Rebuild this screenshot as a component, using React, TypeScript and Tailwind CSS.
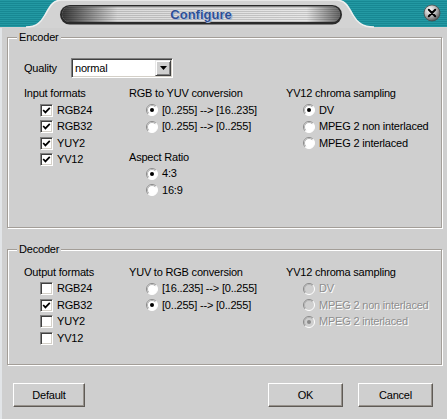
import React from 'react'

const BG = 'bg-[#cfcfcf]'

function TitleBar() {
  return (
    <div className="relative h-[28px] w-[447px] shrink-0">
      <svg className="absolute left-0 top-0" width="447" height="28" viewBox="0 0 447 28">
        <defs>
          <pattern id="teal" width="4" height="2" patternUnits="userSpaceOnUse">
            <rect width="4" height="2" fill="#178893" />
            <rect width="4" height="1" fill="#2399a3" />
          </pattern>
          <pattern id="stripes" width="4" height="2" patternUnits="userSpaceOnUse">
            <rect width="4" height="2" fill="#c4c4c4" />
            <rect width="4" height="1" fill="#e6e6e6" />
          </pattern>
          <linearGradient id="shade" x1="0" x2="1" y1="0" y2="0">
            <stop offset="0" stopColor="#000" stopOpacity="0.75" />
            <stop offset="0.2" stopColor="#000" stopOpacity="0.05" />
            <stop offset="0.88" stopColor="#000" stopOpacity="0" />
            <stop offset="1" stopColor="#000" stopOpacity="0.55" />
          </linearGradient>
          <radialGradient id="ball" cx="0.38" cy="0.32" r="0.7">
            <stop offset="0" stopColor="#ffffff" />
            <stop offset="0.55" stopColor="#b8b8b8" />
            <stop offset="1" stopColor="#555" />
          </radialGradient>
        </defs>
        <rect width="447" height="28" fill="#cfcfcf" />
        <rect width="447" height="27" fill="url(#teal)" />
        <path
          d="M0,28 L0,27 L26,27 C37,27 41,22 45,15 C50,6 53,0 62,0 L336,0 C345,0 348,6 353,15 C357,22 362,27 374,27 L447,27 L447,28 Z"
          fill="#d3d3d3"
        />
        <path
          d="M26,27 C37,27 41,22 45,15 C50,6 53,0 62,0 L336,0 C345,0 348,6 353,15 C357,22 362,27 374,27"
          fill="none"
          stroke="#efefef"
          strokeWidth="1.5"
        />
        <rect x="60" y="5" width="282" height="19.5" rx="9.75" fill="#2a2a2a" />
        <rect x="62" y="6.5" width="278" height="15.5" rx="7.75" fill="url(#stripes)" />
        <rect x="62" y="6.5" width="278" height="15.5" rx="7.75" fill="url(#shade)" />
        <circle cx="432" cy="13" r="8" fill="url(#ball)" stroke="#4a4a4a" strokeWidth="0.8" />
        <path d="M428.8,9.8 L435.2,16.2 M435.2,9.8 L428.8,16.2" stroke="#000" strokeWidth="2" strokeLinecap="round" />
      </svg>
      <div className="absolute left-[60px] top-[5px] w-[282px] h-[19px] flex items-center justify-center text-[13px] font-bold tracking-normal text-[#2d4f93] [text-shadow:0_0_1px_#e8eefa,1px_1px_0_#9aa8c8]">
        Configure
      </div>
    </div>
  )
}

function Check({ checked }: { checked?: boolean }) {
  return (
    <div className="w-[13px] h-[13px] shrink-0 bg-white border border-t-[#808080] border-l-[#808080] border-b-white border-r-white shadow-[inset_1px_1px_0_#404040,inset_-1px_-1px_0_#d4d0c8] flex items-center justify-center">
      {checked && (
        <svg width="9" height="9" viewBox="0 0 9 9">
          <path d="M1.2,4 L3.4,6.4 L7.8,1.8" fill="none" stroke="#000" strokeWidth="1.7" />
        </svg>
      )}
    </div>
  )
}

function Radio({ checked, disabled }: { checked?: boolean; disabled?: boolean }) {
  return (
    <svg width="12" height="12" viewBox="0 0 12 12" className="shrink-0">
      <circle cx="6" cy="6" r="5.5" fill={disabled ? '#cfcfcf' : '#fff'} />
      <path d="M2.1,9.9 A5.5,5.5 0 0 1 9.9,2.1" fill="none" stroke="#8a8a8a" strokeWidth="1" />
      <path d="M2.8,9.2 A4.5,4.5 0 0 1 9.2,2.8" fill="none" stroke="#b4b4b4" strokeWidth="1" />
      <path d="M9.9,2.1 A5.5,5.5 0 0 1 2.1,9.9" fill="none" stroke="#fff" strokeWidth="1" />
      {checked && <circle cx="6" cy="6" r="2" fill={disabled ? '#8a8a8a' : '#000'} />}
    </svg>
  )
}

function CheckRow({ label, checked }: { label: string; checked?: boolean }) {
  return (
    <div className="h-[16.5px] flex items-center pl-[16px] gap-[4px]">
      <Check checked={checked} />
      <span>{label}</span>
    </div>
  )
}

function RadioRow({ label, checked, disabled }: { label: string; checked?: boolean; disabled?: boolean }) {
  return (
    <div className="h-[16.5px] flex items-center pl-[17px] gap-[4px]">
      <Radio checked={checked} disabled={disabled} />
      <span className={disabled ? 'text-[#8e8e8e] [text-shadow:1px_1px_0_#fff]' : ''}>{label}</span>
    </div>
  )
}

function Heading({ children, className = '' }: { children: React.ReactNode; className?: string }) {
  return <div className={`h-[17px] flex items-center ${className}`}>{children}</div>
}

function GroupBox({ label, className, children }: { label: string; className: string; children: React.ReactNode }) {
  return (
    <div className={`relative ml-[5px] w-[435px] border border-[#a39e98] shadow-[1px_1px_0_#fff,inset_1px_1px_0_#fff] pl-[16px] ${className}`}>
      <span className={`absolute left-[9px] top-[-7px] px-[2px] leading-[13px] ${BG}`}>{label}</span>
      {children}
    </div>
  )
}

function Button({ label, className = '' }: { label: string; className?: string }) {
  return (
    <button className={`h-[24px] ${BG} border border-t-white border-l-white border-b-[#5f5b56] border-r-[#5f5b56] shadow-[inset_-1px_-1px_0_#98938d] flex items-center justify-center ${className}`}>
      {label}
    </button>
  )
}

export default function App() {
  return (
    <div className={`w-[447px] h-[419px] ${BG} flex flex-col overflow-hidden font-['Liberation_Sans',Arial,sans-serif] text-[11px] leading-[13px] tracking-[-0.2px] text-black`}>
      <TitleBar />
      <div className="flex flex-1">
        <div className="w-[2px] bg-[#e2e5e8]" />
        <div className="flex-1 flex flex-col">
          <GroupBox label="Encoder" className="mt-[9px] h-[191px] pt-[20px]">
            <div className="flex items-center h-[20px]">
              <span className="w-[47px]">Quality</span>
              <div className="relative w-[102px] h-[20px] bg-white border border-t-[#808080] border-l-[#808080] border-b-white border-r-white shadow-[inset_1px_1px_0_#404040,inset_-1px_-1px_0_#d4d0c8] flex items-center pl-[3px]">
                normal
                <div className={`absolute right-[1px] top-[1px] w-[16px] h-[16px] ${BG} border border-t-[#e8e8e8] border-l-[#e8e8e8] border-b-[#404040] border-r-[#404040] shadow-[inset_1px_1px_0_#fff,inset_-1px_-1px_0_#808080] flex items-center justify-center`}>
                  <svg width="7" height="4" viewBox="0 0 7 4">
                    <path d="M0,0 L7,0 L3.5,4 Z" fill="#000" />
                  </svg>
                </div>
              </div>
            </div>
            <div className="flex mt-[7px]">
              <div className="w-[105px]">
                <Heading>Input formats</Heading>
                <CheckRow label="RGB24" checked />
                <CheckRow label="RGB32" checked />
                <CheckRow label="YUY2" checked />
                <CheckRow label="YV12" checked />
              </div>
              <div className="w-[157px]">
                <Heading>RGB to YUV conversion</Heading>
                <RadioRow label="[0..255] --> [16..235]" checked />
                <RadioRow label="[0..255] --> [0..255]" />
                <Heading className="mt-[13.5px]">Aspect Ratio</Heading>
                <RadioRow label="4:3" checked />
                <RadioRow label="16:9" />
              </div>
              <div>
                <Heading>YV12 chroma sampling</Heading>
                <RadioRow label="DV" checked />
                <RadioRow label="MPEG 2 non interlaced" />
                <RadioRow label="MPEG 2 interlaced" />
              </div>
            </div>
          </GroupBox>

          <GroupBox label="Decoder" className="mt-[21px] h-[116px] pt-[13.5px]">
            <div className="flex">
              <div className="w-[105px]">
                <Heading>Output formats</Heading>
                <CheckRow label="RGB24" />
                <CheckRow label="RGB32" checked />
                <CheckRow label="YUY2" />
                <CheckRow label="YV12" />
              </div>
              <div className="w-[157px]">
                <Heading>YUV to RGB conversion</Heading>
                <RadioRow label="[16..235] --> [0..255]" />
                <RadioRow label="[0..255] --> [0..255]" checked />
              </div>
              <div>
                <Heading>YV12 chroma sampling</Heading>
                <RadioRow label="DV" disabled />
                <RadioRow label="MPEG 2 non interlaced" disabled />
                <RadioRow label="MPEG 2 interlaced" checked disabled />
              </div>
            </div>
          </GroupBox>

          <div className="mt-[18px] flex">
            <Button label="Default" className="ml-[11px] w-[72px]" />
            <Button label="OK" className="ml-auto w-[75px]" />
            <Button label="Cancel" className="ml-[15px] mr-[14px] w-[75px]" />
          </div>
        </div>
      </div>
    </div>
  )
}
